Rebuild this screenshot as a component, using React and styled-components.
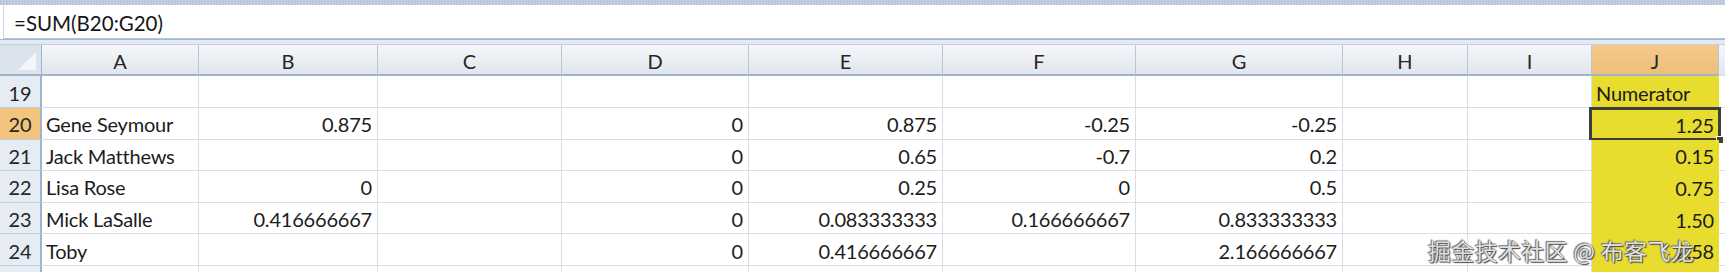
import styled, { createGlobalStyle } from 'styled-components'

const GlobalStyle = createGlobalStyle`
    html, body {
        margin: 0;
        padding: 0;
        background: #ffffff;
    }
    body {
        font-family: Lato, "Liberation Sans", sans-serif;
    }
`

const COLS = [42, 157, 179, 184, 187, 194, 193, 207, 125, 124, 127, 6]

const rows = [
    { n: 19, cells: ['', '', '', '', '', '', '', '', '', 'Numerator'] },
    { n: 20, cells: ['Gene Seymour', '0.875', '', '0', '0.875', '-0.25', '-0.25', '', '', '1.25'], active: true },
    { n: 21, cells: ['Jack Matthews', '', '', '0', '0.65', '-0.7', '0.2', '', '', '0.15'] },
    { n: 22, cells: ['Lisa Rose', '0', '', '0', '0.25', '0', '0.5', '', '', '0.75'] },
    { n: 23, cells: ['Mick LaSalle', '0.416666667', '', '0', '0.083333333', '0.166666667', '0.833333333', '', '', '1.50'] },
    { n: 24, cells: ['Toby', '', '', '0', '0.416666667', '', '2.166666667', '', '', '2.58'] },
    { n: 25, cells: ['', '', '', '', '', '', '', '', '', ''] },
]

const letters = ['A', 'B', 'C', 'D', 'E', 'F', 'G', 'H', 'I', 'J']

const Page = styled.div`
    position: relative;
    width: 1725px;
    height: 272px;
    overflow: hidden;
    background: #ffffff;
    color: #1c1c1c;
`

const RibbonEdge = styled.div`
    height: 5px;
    background: repeating-linear-gradient(90deg, #b7c6da 0 2px, #c8d4e4 2px 3px);
`

const FormulaBar = styled.div`
    display: flex;
    align-items: center;
    box-sizing: border-box;
    height: 34px;
    margin-left: 3px;
    padding: 2px 0 0 10px;
    background: #ffffff;
    border-left: 1px solid #c9d3df;
    border-bottom: 1px solid #b3c3d7;
    font-size: 20.5px;
    color: #161616;
`

const Divider = styled.div`
    height: 6px;
    background: #e3eaf3;
    border-top: 1px solid #a6b8cf;
    border-bottom: 1px solid #c2cfdf;
    box-sizing: border-box;
`

const Grid = styled.div`
    display: grid;
    grid-template-columns: ${COLS.map((c) => `${c}px`).join(' ')};
    grid-template-rows: 31px 32px;
    grid-auto-rows: 31.6px;
`

const ColHead = styled.div`
    display: flex;
    align-items: center;
    justify-content: center;
    box-sizing: border-box;
    padding-top: 2px;
    font-size: 20px;
    color: #262626;
    border-right: 1px solid #b9c6d6;
    border-bottom: 2px solid #9fb3cb;
    background: ${(p) =>
        p.$selected
            ? 'linear-gradient(#f4c98c, #eebf78)'
            : 'linear-gradient(#f5f7fa, #e1e6ec)'};
`

const Corner = styled.div`
    position: relative;
    box-sizing: border-box;
    background: #dbe3ed;
    border-right: 1px solid #9fb3cb;
    border-bottom: 2px solid #9fb3cb;

    &::after {
        content: '';
        position: absolute;
        right: 5px;
        bottom: 4px;
        border-left: 18px solid transparent;
        border-bottom: 18px solid #f2f5f9;
    }
`

const RowHead = styled.div`
    display: flex;
    align-items: center;
    justify-content: center;
    box-sizing: border-box;
    padding-top: 2px;
    font-size: 20px;
    color: #262626;
    border-right: 2px solid #9fb3cb;
    border-bottom: 1px solid #c4cfdc;
    background: ${(p) => (p.$selected ? '#f2c47e' : '#e6ecf4')};
`

const Cell = styled.div`
    position: relative;
    display: flex;
    align-items: center;
    justify-content: ${(p) => (p.$num ? 'flex-end' : 'flex-start')};
    box-sizing: border-box;
    padding: 2px 5px 0 4px;
    font-size: 20px;
    letter-spacing: -0.2px;
    color: #1c1c1c;
    white-space: nowrap;
    border-right: 1px solid #d9dee6;
    border-bottom: 1px solid #d9dee6;
    background: ${(p) => (p.$hl ? '#e8dc2f' : '#ffffff')};
    ${(p) => p.$hl && 'border-right: none; border-bottom: none;'}
`

const Selection = styled.div`
    position: absolute;
    inset: -1px -2px -1px -3px;
    border: 3px solid #3d3d3b;
    pointer-events: none;

    &::after {
        content: '';
        position: absolute;
        right: -6px;
        bottom: -6px;
        width: 6px;
        height: 6px;
        background: #3d3d3b;
        border: 1px solid #ffffff;
    }
`

const Filler = styled.div`
    border-bottom: 1px solid #d9dee6;
    background: ${(p) => (p.$head ? 'linear-gradient(#f5f7fa, #e1e6ec)' : '#ffffff')};
`

const Watermark = styled.div`
    position: absolute;
    right: 31px;
    bottom: 5px;
    font-family: "Noto Sans CJK SC", sans-serif;
    font-size: 23px;
    letter-spacing: 0.3px;
    color: rgba(240, 240, 240, 0.92);
    text-shadow: 0 0 1px #555, 1px 1px 1px #444, -1px -1px 1px #777;
    white-space: nowrap;
`

function App() {
    return (
        <Page>
            <GlobalStyle />
            <RibbonEdge />
            <FormulaBar>=SUM(B20:G20)</FormulaBar>
            <Divider />
            <Grid>
                <Corner />
                {letters.map((l) => (
                    <ColHead key={l} $selected={l === 'J'}>
                        {l}
                    </ColHead>
                ))}
                <Filler $head />
                {rows.map((r) => [
                    <RowHead key={`h${r.n}`} $selected={r.active}>
                        {r.n}
                    </RowHead>,
                    ...r.cells.map((v, i) => (
                        <Cell
                            key={`${r.n}-${i}`}
                            $num={i > 0 && v !== 'Numerator'}
                            $hl={i === 9}
                        >
                            {v}
                            {r.active && i === 9 && <Selection />}
                        </Cell>
                    )),
                    <Filler key={`f${r.n}`} />,
                ])}
            </Grid>
            <Watermark>掘金技术社区 @ 布客飞龙</Watermark>
        </Page>
    )
}

export default App
